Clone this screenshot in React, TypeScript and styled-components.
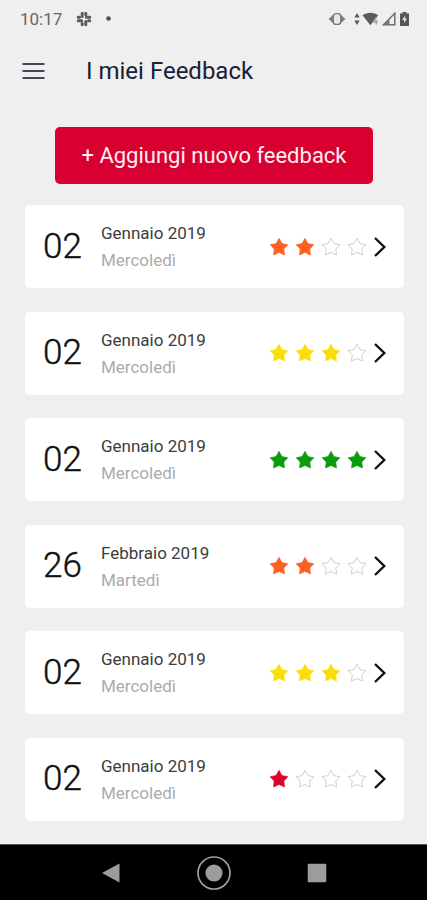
import React from "react";
import styled, { createGlobalStyle } from "styled-components";

const GlobalStyle = createGlobalStyle`
  *, *::before, *::after { box-sizing: border-box; }
  body {
    margin: 0;
    background: #efefef;
    font-family: Roboto, "Open Sans", sans-serif;
  }
  button { font: inherit; border: 0; padding: 0; cursor: pointer; }
  svg { display: block; flex: none; }
`;

const Screen = styled.div`
  display: flex;
  flex-direction: column;
  min-height: 100vh;
`;

const StatusBar = styled.div`
  display: flex;
  align-items: center;
  justify-content: space-between;
  height: 37px;
  padding: 0 18px 0 20px;
  color: #666;
`;

const StatusGroup = styled.div<{ $gap: number }>`
  display: flex;
  align-items: center;
  gap: ${(p) => p.$gap}px;
`;

const Clock = styled.time`
  font-size: 17px;
  line-height: 20px;
`;

const Header = styled.header`
  display: flex;
  align-items: center;
  gap: 41px;
  height: 67px;
  padding: 0 22px;
`;

const MenuButton = styled.button`
  background: none;
  color: #444852;
`;

const Title = styled.h1`
  margin: 0;
  font-size: 24px;
  line-height: 28px;
  font-weight: 400;
  color: #1a2035;
`;

const Main = styled.main`
  display: flex;
  flex: 1;
  flex-direction: column;
  gap: 21px;
  padding: 23px 23px 23px 25px;
`;

const AddButton = styled.button`
  height: 57px;
  margin: 0 31px 0 30px;
  border-radius: 5px;
  background: #d80030;
  color: #ffeef0;
  font-size: 22px;
  line-height: 28px;
  white-space: nowrap;
`;

const List = styled.ul`
  display: flex;
  flex: 1;
  flex-direction: column;
  justify-content: space-between;
  gap: 23px;
  margin: 0;
  padding: 0;
  list-style: none;
`;

const Card = styled.a`
  display: flex;
  align-items: center;
  height: 83px;
  padding: 0 18px;
  border-radius: 5px;
  background: #fff;
  color: #111;
  text-decoration: none;
`;

const Day = styled.span`
  width: 58px;
  font-size: 35px;
  line-height: 40px;
  font-weight: 300;
  -webkit-text-stroke: 0.4px currentColor;
`;

const DateText = styled.span`
  display: flex;
  flex: 1;
  flex-direction: column;
  gap: 7px;
  font-size: 17px;
  line-height: 20px;
  white-space: nowrap;
`;

const Month = styled.span`
  color: #3c3c3c;
`;

const Weekday = styled.span`
  color: #ababab;
`;

const Stars = styled.span`
  display: flex;
  gap: 6px;
  margin-right: 7px;
`;

const SystemNav = styled.nav`
  display: flex;
  align-items: center;
  justify-content: space-between;
  height: 56px;
  padding: 0 calc(50% - 122px);
  border-top: 1px solid #555;
  background: #000;
`;

const NavButton = styled.button`
  display: grid;
  place-items: center;
  width: 38px;
  height: 38px;
  background: none;
`;

const levelColors: Record<number, string> = {
  1: "#df0029",
  2: "#fc6023",
  3: "#fbdd0a",
  4: "#0a9c0c",
};

function Star({ color }: { color?: string }) {
  return (
    <svg width="20" height="20" viewBox="0 0 20 20" aria-hidden="true">
      <path
        d="M10 1.2 L12.9 6.6 L18.9 7.7 L14.8 12 L15.5 18 L10 15.5 L4.5 18 L5.2 12 L1.1 7.7 L7.1 6.6 Z"
        fill={color ?? "#fff"}
        stroke={color ?? "#cfcfcf"}
        strokeWidth={color ? 0.6 : 1}
        strokeLinejoin="round"
      />
    </svg>
  );
}

function Rating({ value }: { value: number }) {
  return (
    <Stars role="img" aria-label={`${value} su 4`}>
      {[1, 2, 3, 4].map((n) => (
        <Star key={n} color={n <= value ? levelColors[value] : undefined} />
      ))}
    </Stars>
  );
}

const Chevron = () => (
  <svg width="12" height="20" viewBox="0 0 12 20" fill="none" stroke="#111" strokeWidth="2.4" aria-hidden="true">
    <path d="M1 1 L10.3 10 L1 19" />
  </svg>
);

const SlackIcon = () => (
  <svg width="16" height="16" viewBox="0 0 16 16" fill="none" stroke="#5c5c5c" strokeWidth="3" strokeLinecap="round" aria-hidden="true">
    <path d="M6.2 2.3V5.6M2.2 6.2H3.4M10.4 6.2H13.8M9.8 2.2V3.4M9.8 10.4V13.8M12.6 9.8H13.8M2.2 9.8H5.6M6.2 12.6V13.8" />
  </svg>
);

const VibrateIcon = () => (
  <svg width="18" height="14" viewBox="0 0 18 14" aria-hidden="true">
    <path d="M5.5 2.5 L0.6 7 L5.5 11.5 Z M12.5 2.5 L17.4 7 L12.5 11.5 Z" fill="#7c7c7c" />
    <rect x="5.2" y="1.6" width="7.6" height="10.8" rx="3" fill="#e8e8e8" stroke="#777" strokeWidth="1.4" />
  </svg>
);

const TrafficIcon = () => (
  <svg width="6" height="12" viewBox="0 0 6 12" fill="#555" aria-hidden="true">
    <path d="M3 0 L5.6 4.5 H0.4 Z M3 12 L5.6 7.5 H0.4 Z" />
  </svg>
);

const WifiIcon = () => (
  <svg width="18" height="14" viewBox="0 0 18 14" aria-hidden="true">
    <path d="M0.5 3.2 C5 -0.2 12 -0.2 16.2 3.2 L8.4 13.3 Z" fill="#5b5b5b" />
    <path d="M13.9 6 L11.5 10 H16 M14.3 7.8 V12.5" fill="none" stroke="#aaa" strokeWidth="1.5" />
  </svg>
);

const SignalIcon = () => (
  <svg width="14" height="14" viewBox="0 0 14 14" aria-hidden="true">
    <path d="M1.5 12.8 H12.8 V1.3 Z" fill="none" stroke="#686868" strokeWidth="1.4" />
    <path d="M1.5 12.8 L7.5 7 V12.8 Z" fill="#777" />
  </svg>
);

const BatteryIcon = () => (
  <svg width="9" height="14" viewBox="0 0 9 14" aria-hidden="true">
    <path d="M2.5 0 H6.5 V1.5 H9 V14 H0 V1.5 H2.5 Z" fill="#565656" />
    <path d="M5.2 3.5 L2.2 8 H4.2 V11 L6.9 6.8 H5.2 Z" fill="#e8e8e8" />
  </svg>
);

const feedbacks = [
  { day: "02", month: "Gennaio 2019", weekday: "Mercoledì", rating: 2 },
  { day: "02", month: "Gennaio 2019", weekday: "Mercoledì", rating: 3 },
  { day: "02", month: "Gennaio 2019", weekday: "Mercoledì", rating: 4 },
  { day: "26", month: "Febbraio 2019", weekday: "Martedì", rating: 2 },
  { day: "02", month: "Gennaio 2019", weekday: "Mercoledì", rating: 3 },
  { day: "02", month: "Gennaio 2019", weekday: "Mercoledì", rating: 1 },
];

export default function App() {
  return (
    <Screen>
      <GlobalStyle />
      <StatusBar>
        <StatusGroup $gap={14}>
          <Clock>10:17</Clock>
          <SlackIcon />
          <svg width="5" height="5" viewBox="0 0 5 5" aria-hidden="true">
            <circle cx="2.5" cy="2.5" r="2.3" fill="#505050" />
          </svg>
        </StatusGroup>
        <StatusGroup $gap={8}>
          <VibrateIcon />
          <StatusGroup $gap={2}>
            <TrafficIcon />
            <WifiIcon />
            <SignalIcon />
            <span />
            <BatteryIcon />
          </StatusGroup>
        </StatusGroup>
      </StatusBar>
      <Header>
        <MenuButton type="button" aria-label="Menu">
          <svg width="23" height="18" viewBox="0 0 23 18" stroke="currentColor" strokeWidth="2" aria-hidden="true">
            <path d="M0.5 2H22.5M0.5 9H22.5M0.5 16H22.5" />
          </svg>
        </MenuButton>
        <Title>I miei Feedback</Title>
      </Header>
      <Main>
        <AddButton type="button">+ Aggiungi nuovo feedback</AddButton>
        <List>
          {feedbacks.map((item, index) => (
            <li key={index}>
              <Card href="#">
                <Day>{item.day}</Day>
                <DateText>
                  <Month>{item.month}</Month>
                  <Weekday>{item.weekday}</Weekday>
                </DateText>
                <Rating value={item.rating} />
                <Chevron />
              </Card>
            </li>
          ))}
        </List>
      </Main>
      <SystemNav aria-label="Sistema">
        <NavButton type="button" aria-label="Indietro">
          <svg width="20" height="20" viewBox="0 0 20 20" fill="#9c9c9c" aria-hidden="true">
            <path d="M1 10 L18.5 0.5 V19.5 Z" />
          </svg>
        </NavButton>
        <NavButton type="button" aria-label="Home">
          <svg width="34" height="34" viewBox="0 0 34 34" aria-hidden="true">
            <circle cx="17" cy="17" r="16" fill="none" stroke="#a0a0a0" strokeWidth="1.7" />
            <circle cx="17" cy="17" r="8.6" fill="#9c9c9c" />
          </svg>
        </NavButton>
        <NavButton type="button" aria-label="Recenti">
          <svg width="20" height="20" viewBox="0 0 20 20" fill="#9c9c9c" aria-hidden="true">
            <rect x="0.7" y="0.7" width="18.6" height="18.6" rx="1" />
          </svg>
        </NavButton>
      </SystemNav>
    </Screen>
  );
}
